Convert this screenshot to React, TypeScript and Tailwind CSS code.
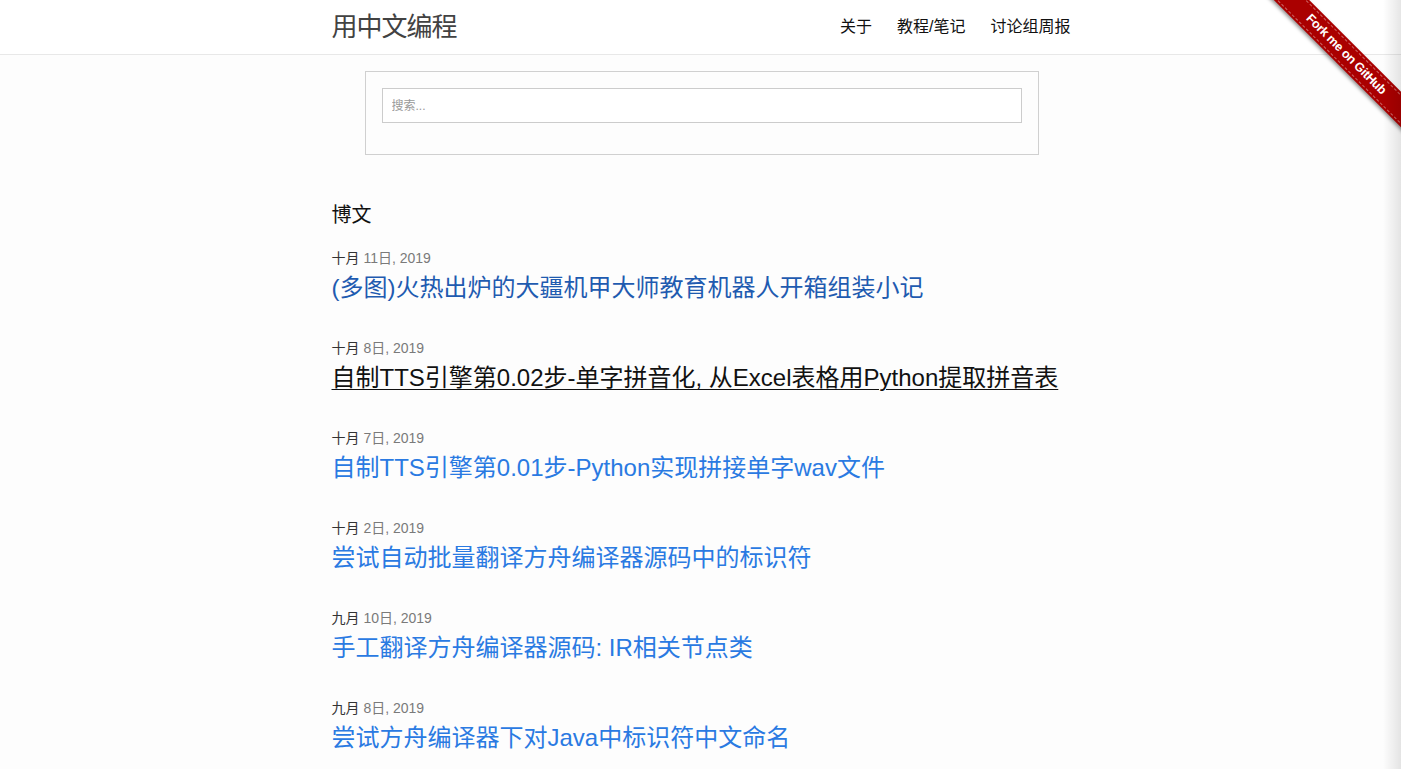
import React from "react";

type Post = {
  month: string;
  day: string;
  title: string;
  state: "visited" | "hover" | "link";
};

const posts: Post[] = [
  { month: "十月", day: "11日, 2019", title: "(多图)火热出炉的大疆机甲大师教育机器人开箱组装小记", state: "visited" },
  { month: "十月", day: "8日, 2019", title: "自制TTS引擎第0.02步-单字拼音化, 从Excel表格用Python提取拼音表", state: "hover" },
  { month: "十月", day: "7日, 2019", title: "自制TTS引擎第0.01步-Python实现拼接单字wav文件", state: "link" },
  { month: "十月", day: "2日, 2019", title: "尝试自动批量翻译方舟编译器源码中的标识符", state: "link" },
  { month: "九月", day: "10日, 2019", title: "手工翻译方舟编译器源码: IR相关节点类", state: "link" },
  { month: "九月", day: "8日, 2019", title: "尝试方舟编译器下对Java中标识符中文命名", state: "link" },
];

const titleColor = {
  visited: "text-[#1f5bb0]",
  hover: "text-[#111] underline decoration-1 underline-offset-[3px]",
  link: "text-[#2a7ae2]",
};

function ForkRibbon() {
  return (
    <div className="absolute top-0 right-0 w-[150px] h-[150px] overflow-hidden pointer-events-none">
      <div className="absolute left-[-16px] top-[42px] w-[222px] h-[25px] rotate-45 bg-[#aa0000] shadow-[0_2px_4px_rgba(0,0,0,0.45)] flex items-center justify-center">
        <div className="absolute left-0 right-0 top-[2px] border-t border-dashed border-white/40" />
        <div className="absolute left-0 right-0 bottom-[2px] border-t border-dashed border-white/40" />
        <span className="text-white font-bold text-[12.5px] tracking-[-0.3px] [font-family:'Liberation_Sans',sans-serif]">
          Fork me on GitHub
        </span>
      </div>
    </div>
  );
}

export default function App() {
  return (
    <div className="relative h-screen overflow-hidden bg-[#fdfdfd] text-[#111] [font-family:'Liberation_Sans','Noto_Sans_CJK_SC',sans-serif]">
      <header className="h-[55px] border-b border-[#e8e8e8] bg-white">
        <div className="mx-auto w-[740px] h-[54px] pl-px flex items-center justify-between">
          <a className="text-[26px] tracking-[-1px] text-[#424242] leading-none">用中文编程</a>
          <nav className="flex gap-[25px] text-[16px] text-[#111] leading-none">
            <a>关于</a>
            <a>教程/笔记</a>
            <a>讨论组周报</a>
          </nav>
        </div>
      </header>

      <main className="mx-auto w-[740px] pl-px">
        <div className="mt-4 ml-[33px] mr-[32px] border border-[#d0d0d0] px-4 pt-4 pb-[31px]">
          <input
            className="block w-full h-[35px] border border-[#cccccc] bg-white pl-[9px] text-[12px] placeholder:text-[#999] outline-none"
            placeholder="搜索..."
          />
        </div>

        <h2 className="mt-[46px] text-[20px] leading-[28px] text-[#111]">博文</h2>

        <ul className="mt-[19px] flex flex-col gap-[34px]">
          {posts.map((p) => (
            <li key={p.title} className="flex flex-col gap-[4px]">
              <div className="text-[14px] leading-[20px]">
                <span className="text-[#333]">{p.month}</span>{" "}
                <span className="text-[#7a7a7a]">{p.day}</span>
              </div>
              <a className={`text-[24px] leading-[32px] ${titleColor[p.state]}`}>{p.title}</a>
            </li>
          ))}
        </ul>
      </main>

      <ForkRibbon />
      <div className="absolute top-0 right-0 bottom-0 w-[18px] bg-gradient-to-r from-transparent to-black/10 pointer-events-none" />
    </div>
  );
}
